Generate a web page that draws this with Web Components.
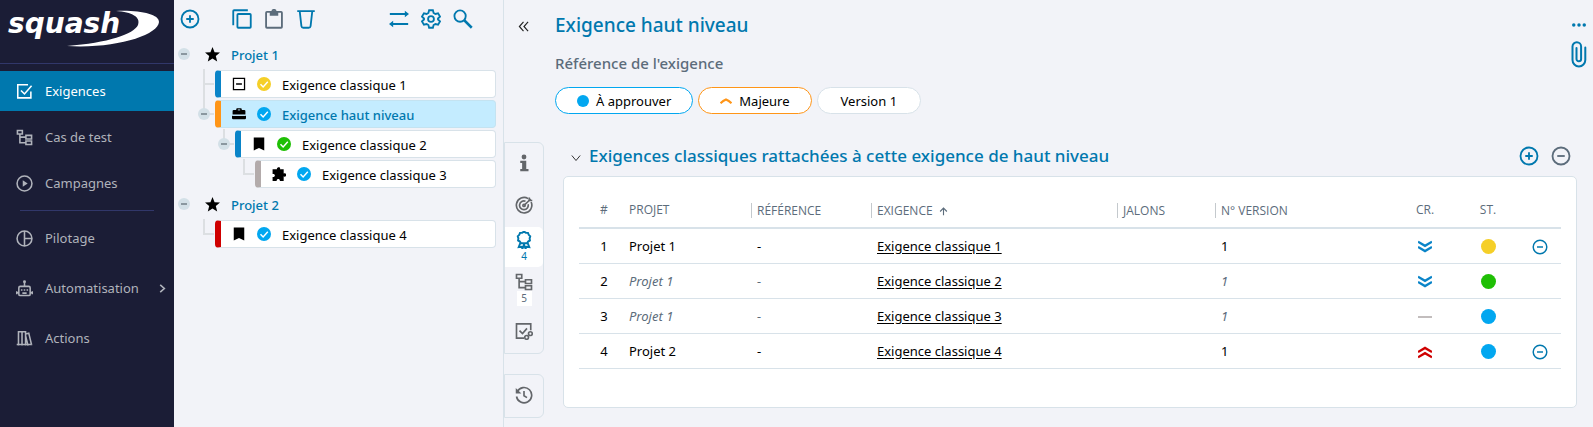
<!DOCTYPE html>
<html lang="fr">
<head>
<meta charset="utf-8">
<title>Squash - Exigences</title>
<style>
body {
  margin: 0;
  background: #f2f3f8;
  color: #000;
  font: 13px/20px "Noto Sans", "Open Sans", sans-serif;
  --blue: #0078ae;
  --line: #d8e2e9;
  --grey: #5c6c7b;
}
</style>
<script>
const ICONS = {
  check: '<path d="M21 12v9H2.500V2.500H17M7 10.500l5 5L22 4"/>',
  tree: '<path d="M2 2h7v5H2zM14 9h8v5h-8zM14 17h8v5h-8zM5.500 7v12.500H14M5.500 11.500H14"/>',
  play: '<circle cx="12" cy="12" r="10.500"/><path fill="currentColor" stroke="none" d="M9.500 7.500l7 4.500-7 4.500z"/>',
  pie: '<circle cx="12" cy="12" r="10.500"/><path d="M12 1.500v21M12 12h10.500"/>',
  robot: '<rect x="4" y="9" width="16" height="13" rx="2"/><path d="M12 9V3M1 16v4M23 16v4M1 18h3M20 18h3M9 18.500h6"/><circle cx="12" cy="2.500" r="1"/><path d="M8 13v2M16 13v2M12 13v2"/>',
  books: '<path d="M3.500 22V2.500h10V22M8.500 2.500V22M13.500 5.500l4.500-1L22 21M13.500 8l3.500 14M1 20.500h22"/>',
  right: '<path stroke-width="3.500" d="M7 4l9 8-9 8"/>',
  plus: '<circle cx="12" cy="12" r="10.200"/><path d="M12 7.500v9M7.500 12h9"/>',
  minus: '<circle cx="12" cy="12" r="10.200"/><path d="M7.500 12h9"/>',
  copy: '<rect x="6.500" y="6" width="16" height="16.500" rx="1"/><path d="M1.500 19.500V2.500q0-1 1-1H19"/>',
  paste: '<rect x="2.500" y="3.500" width="19" height="19" rx="1"/><path fill="currentColor" d="M8 4h8v3H8z"/><circle cx="12" cy="3" r="2"/>',
  trash: '<path d="M1.500 2.500h21M4.500 3l2 17.500q.3 2 2.200 2h6.600q1.900 0 2.200-2L19.500 3"/>',
  swap: '<path d="M1 6h20M3 18h20"/><path fill="currentColor" stroke="none" d="M19 2l5 4-5 4zM5 14l-5 4 5 4z"/>',
  gear: '<path d="M9.700 1.500h4.600l.8 3.200 2.200 1.300 3.200-.9 2.300 4-2.400 2.300v1.200l2.400 2.300-2.300 4-3.200-.9-2.200 1.300-.8 3.200H9.700l-.8-3.200L6.700 18l-3.200.9-2.300-4 2.400-2.300v-1.200L1.200 9.100l2.300-4 3.200.9 2.200-1.300z"/><circle cx="12" cy="12" r="3.500"/>',
  search: '<circle cx="8.500" cy="8.500" r="6.800"/><path d="M13.500 13.500l9 9" stroke-width="3"/>',
  star: '<path fill="currentColor" stroke="none" d="M12 0l3.300 8.300 8.700.6-6.700 5.600 2.200 8.700L12 18.400l-7.500 4.800 2.200-8.700L0 8.900l8.700-.6z"/>',
  box: '<path d="M2.500 2.500h19v19h-19zM7 12h10"/>',
  case: '<path fill="currentColor" stroke="none" d="M8 2h8l1 3h4q2 0 2 2v6H1V7q0-2 2-2h4zM0 15h24v4q0 2-2 2H2q-2 0-2-2z"/><path stroke="#c6ecff" stroke-width="1.500" d="M10 5h4M1 14.500h22"/>',
  bookmark: '<path fill="currentColor" stroke="none" d="M3 1h18v22l-9-4-9 4z"/>',
  puzzle: '<path fill="currentColor" stroke="none" d="M1 4h7.500C7.500 0 14 -1 14 2.500q0 1-.5 1.500H20v7c6-1.500 6 5.500 1.500 5.500-1 0-1.500-.5-1.500-.5V24h-6.500c.5-4.500-6-4.500-5.500 0H1v-7c5 1 5.500-6 0-5z"/>',
  ok: '<circle cx="12" cy="12" r="12" fill="currentColor" stroke="none"/><path stroke="#fff" stroke-width="2.500" d="M6 12.500l4.500 4.500L18.500 8"/>',
  dot: '<circle cx="12" cy="12" r="12" fill="currentColor" stroke="none"/>',
  collapse: '<path stroke-width="2.500" d="M12 2l-9 10 9 10M22 2l-9 10 9 10"/>',
  info: '<circle cx="12" cy="4" r="3.200" fill="currentColor" stroke="none"/><path fill="currentColor" stroke="none" d="M7 9h8v11h3v3H7v-3h2.500v-8H7z"/>',
  target: '<path d="M21.500 8a10.300 10.300 0 1 1-4-4.500M17.500 11a5.800 5.800 0 1 1-3.500-4M12 12.500L21 4"/><circle cx="12" cy="12.500" r="1.500"/><path d="M19 2v4h4"/>',
  rosette: '<path stroke-width="2.600" d="M12 1l2.500 1.300 2.800.2 1 2.600 2 2-.8 2.700.4 2.800-2.400 1.500-1.500 2.300-2.800-.2-1.200.6-1.200-.6-2.800.2-1.500-2.300-2.400-1.500.4-2.800L3.700 7.100l2-2 1-2.600 2.800-.2zM7.500 15L5 21.500l3.500-.5L10 23.500l2-5.500 2 5.500 1.500-2.500 3.500.5-2.500-6.500"/>',
  checklink: '<path d="M21 11V2.500H2v19h10M6 11.500l4 4 6-7"/><circle cx="15.500" cy="20.500" r="2.500"/><circle cx="20.500" cy="15.500" r="2.500"/>',
  history: '<path d="M3 7.500A10.200 10.200 0 1 1 2 14M12 6.500V13l4 2.500"/><path fill="currentColor" stroke="none" d="M1 2.500v7.500h7.500z"/>',
  more: '<g fill="currentColor" stroke="none"><circle cx="3" cy="12" r="3"/><circle cx="12" cy="12" r="3"/><circle cx="21" cy="12" r="3"/></g>',
  down: '<path d="M2 6l10 12L22 6"/>',
  up: '<path stroke-width="3" d="M12 22V3M3 12l9-9 9 9"/>',
  major: '<path stroke-width="4.500" d="M1 16.500q5-5 11-7.500 6 2.500 11 7.500"/>',
  minor2: '<path stroke-width="4" d="M0 3l12 7 12-7M0 12l12 7 12-7"/>',
  crit2: '<path stroke-width="4" d="M0 12l12-7 12 7M0 21l12-7 12 7"/>',
  dash: '<path stroke-width="3" d="M0 12h24"/>',
};

class SquashIcon extends HTMLElement {
  constructor() {
    super();
    this.attachShadow({mode: 'open'});
  }

  connectedCallback() {
    const size = this.getAttribute('size') || 16;
    this.shadowRoot.innerHTML = `
<style>
:host { display: inline-flex; flex: none; vertical-align: middle; }
</style>
<svg width="${size}" height="${size}" viewBox="0 0 24 24" fill="none" stroke="currentColor" stroke-width="2.200" aria-hidden="true">${ICONS[this.getAttribute('name')]}</svg>
`;
  }
}
customElements.define('squash-icon', SquashIcon);

class SquashNavItem extends HTMLElement {
  constructor() {
    super();
    this.attachShadow({mode: 'open'});
  }

  connectedCallback() {
    const more = this.hasAttribute('more') ? '<squash-icon name="right" size="11"></squash-icon>' : '';
    this.shadowRoot.innerHTML = `
<style>
:host { display: block; color: #b0b3bb; }
:host([active]) { background: var(--blue); color: #fff; }
a {
  display: flex;
  align-items: center;
  gap: 12px;
  height: 40px;
  padding: 0 6px 0 16px;
  color: inherit;
  text-decoration: none;
}
span { flex: 1; }
</style>
<a href="#"><squash-icon name="${this.getAttribute('icon')}" size="17"></squash-icon><span><slot></slot></span>${more}</a>
`;
  }
}
customElements.define('squash-nav-item', SquashNavItem);

class SquashNav extends HTMLElement {
  constructor() {
    super();
    this.attachShadow({mode: 'open'}).innerHTML = `
<style>
:host { display: block; flex: none; width: 174px; background: #1b1d36; }
.logo { display: block; height: 63px; border-bottom: 1px solid #31376a; }
nav { display: grid; gap: 6px; padding-top: 7px; }
nav.tools { gap: 10px; }
hr { margin: 7px 20px 0; border: 0; border-top: 1px solid #31376a; }
</style>
<a class="logo" href="#" aria-label="squash">
  <svg width="174" height="63" viewBox="0 0 174 63" fill="#fff">
    <text x="8" y="33" font-family="DejaVu Sans, sans-serif" font-size="28" font-weight="bold" font-style="italic">squash</text>
    <path d="M116 11C140 10 159 14 159 22C158 35 116 49 67 46C108 43 134 34 138 25C141 17 132 12 116 11z"/>
  </svg>
</a>
<nav>
  <squash-nav-item icon="check" active>Exigences</squash-nav-item>
  <squash-nav-item icon="tree">Cas de test</squash-nav-item>
  <squash-nav-item icon="play">Campagnes</squash-nav-item>
</nav>
<hr>
<nav class="tools">
  <squash-nav-item icon="pie">Pilotage</squash-nav-item>
  <squash-nav-item icon="robot" more>Automatisation</squash-nav-item>
  <squash-nav-item icon="books">Actions</squash-nav-item>
</nav>
`;
  }
}
customElements.define('squash-nav', SquashNav);

class SquashTreeNode extends HTMLElement {
  constructor() {
    super();
    this.attachShadow({mode: 'open'});
  }

  connectedCallback() {
    const level = +this.getAttribute('level');
    const color = this.getAttribute('color');
    const toggle = this.hasAttribute('open') ? '<button aria-label="Replier"></button>' : '';
    this.shadowRoot.innerHTML = `
<style>
:host { display: flex; height: 30px; padding-left: ${level * 20}px; }
.guide {
  flex: none;
  display: grid;
  place-items: center;
  width: 20px;
}
:host([line]) .guide {
  background:
    linear-gradient(#dcdfe2, #dcdfe2) 9px 0 / 2px 16px no-repeat,
    linear-gradient(#dcdfe2, #dcdfe2) 9px 14px / 11px 2px no-repeat;
}
:host([line=through]) .guide {
  background:
    linear-gradient(#dcdfe2, #dcdfe2) 9px 0 / 2px 30px no-repeat,
    linear-gradient(#dcdfe2, #dcdfe2) 9px 14px / 11px 2px no-repeat;
}
button {
  display: grid;
  place-items: center;
  width: 12px;
  height: 12px;
  padding: 0;
  border: 0;
  border-radius: 50%;
  background: #d3e0e7;
}
button::after { content: ""; width: 6px; height: 2px; background: #8a979f; }
a {
  flex: 1;
  display: flex;
  align-items: center;
  gap: 11px;
  color: inherit;
  text-decoration: none;
}
.item {
  box-sizing: border-box;
  margin: 1px;
  padding-left: 11px;
  border: 1px solid var(--line);
  border-left: 6px solid ${color};
  border-radius: 4px;
  background: #fff;
}
:host([selected]) .item {
  border-color: #c4e3f1;
  border-left-color: ${color};
  background: #c4ecff;
  color: var(--blue);
  font-weight: 500;
}
a squash-icon:first-child { color: #000; }
.status { color: ${this.getAttribute('status')}; }
.label { padding-top: 1px; }
.project { padding-left: 11px; color: var(--blue); font-weight: 500; }
</style>
<span class="guide">${toggle}</span>
${level ? `<a class="item" href="#"><squash-icon name="${this.getAttribute('icon')}" size="14"></squash-icon><squash-icon class="status" name="ok" size="14"></squash-icon><span class="label"><slot></slot></span></a>`
        : '<a class="project" href="#"><squash-icon name="star" size="15"></squash-icon><span class="label"><slot></slot></span></a>'}
`;
  }
}
customElements.define('squash-tree-node', SquashTreeNode);

class SquashTree extends HTMLElement {
  constructor() {
    super();
    this.attachShadow({mode: 'open'}).innerHTML = `
<style>
:host {
  display: block;
  box-sizing: border-box;
  flex: none;
  width: 330px;
  padding-right: 6px;
  border-right: 1px solid var(--line);
}
header { display: flex; justify-content: space-between; height: 38px; margin-bottom: 1px; padding: 0 24px 0 6px; color: var(--blue); }
.group { display: flex; align-items: center; gap: 12px; }
.add { margin-right: 20px; }
.paste { color: var(--grey); }
button { display: flex; padding: 0; border: 0; background: none; color: inherit; }
</style>
<header>
  <div class="group">
    <button class="add" aria-label="Ajouter"><squash-icon name="plus" size="20"></squash-icon></button>
    <button aria-label="Copier"><squash-icon name="copy" size="20"></squash-icon></button>
    <button class="paste" aria-label="Coller"><squash-icon name="paste" size="20"></squash-icon></button>
    <button aria-label="Supprimer"><squash-icon name="trash" size="20"></squash-icon></button>
  </div>
  <div class="group">
    <button aria-label="Importer ou exporter"><squash-icon name="swap" size="20"></squash-icon></button>
    <button aria-label="Options"><squash-icon name="gear" size="20"></squash-icon></button>
    <button aria-label="Rechercher"><squash-icon name="search" size="20"></squash-icon></button>
  </div>
</header>
<slot></slot>
`;
  }
}
customElements.define('squash-tree', SquashTree);

class SquashPill extends HTMLElement {
  constructor() {
    super();
    this.attachShadow({mode: 'open'});
  }

  connectedCallback() {
    const icon = this.getAttribute('icon');
    this.shadowRoot.innerHTML = `
<style>
:host { display: block; }
button {
  display: flex;
  align-items: center;
  gap: 7px;
  height: 27px;
  padding: 0 ${icon ? 21 : 23}px;
  border: 1px solid ${this.getAttribute('color')};
  border-radius: 14px;
  background: #fff;
  color: #000;
  font: inherit;
}
squash-icon { color: ${this.getAttribute('color')}; }
</style>
<button>${icon ? `<squash-icon name="${icon}" size="12"></squash-icon>` : ''}<slot></slot></button>
`;
  }
}
customElements.define('squash-pill', SquashPill);

class SquashAnchors extends HTMLElement {
  constructor() {
    super();
    this.attachShadow({mode: 'open'}).innerHTML = `
<style>
:host { display: flex; flex-direction: column; gap: 20px; flex: none; width: 40px; color: #63666a; }
nav {
  display: grid;
  gap: 2px;
  padding-bottom: 2px;
  border: 1px solid var(--line);
  border-radius: 0 6px 6px 0;
}
a {
  display: flex;
  flex-direction: column;
  align-items: center;
  justify-content: center;
  height: 40px;
  border-radius: 0 5px 5px 0;
  color: inherit;
  text-decoration: none;
  font-size: 10px;
  line-height: 15px;
}
a[aria-current] { background: #fff; color: var(--blue); }
span { width: 15px; text-align: center; background: #fff; color: var(--grey); }
a[aria-current] span { color: var(--blue); }
</style>
<nav>
  <a href="#" aria-label="Informations"><squash-icon name="info" size="18"></squash-icon></a>
  <a href="#" aria-label="Couverture"><squash-icon name="target" size="18"></squash-icon></a>
  <a href="#" aria-current="true"><squash-icon name="rosette" size="18"></squash-icon><span>4</span></a>
  <a href="#"><squash-icon name="tree" size="18"></squash-icon><span>5</span></a>
  <a href="#" aria-label="Liens"><squash-icon name="checklink" size="18"></squash-icon></a>
</nav>
<nav><a href="#" aria-label="Historique"><squash-icon name="history" size="18"></squash-icon></a></nav>
`;
  }
}
customElements.define('squash-anchors', SquashAnchors);

const YELLOW = '#f5cf28', GREEN = '#1fbf05', BLUE = '#02a7f0';
const ROWS = [
  {project: 'Projet 1', name: 'Exigence classique 1', crit: 'minor2', critColor: '#0a84c8', status: YELLOW, direct: true},
  {project: 'Projet 1', name: 'Exigence classique 2', crit: 'minor2', critColor: '#0a84c8', status: GREEN},
  {project: 'Projet 1', name: 'Exigence classique 3', crit: 'dash', critColor: '#bab4b4', status: BLUE},
  {project: 'Projet 2', name: 'Exigence classique 4', crit: 'crit2', critColor: '#cf0000', status: BLUE, direct: true},
];

class SquashTable extends HTMLElement {
  constructor() {
    super();
    const rows = ROWS.map((row, i) => `
<tr class="${row.direct ? '' : 'indirect'}">
  <td class="center">${i + 1}</td>
  <td class="soft">${row.project}</td>
  <td class="soft">-</td>
  <td><a href="#">${row.name}</a></td>
  <td></td>
  <td class="soft">1</td>
  <td class="mid"><squash-icon name="${row.crit}" size="14" style="color: ${row.critColor}"></squash-icon></td>
  <td class="mid"><squash-icon name="dot" size="15" style="color: ${row.status}"></squash-icon></td>
  <td class="act">${row.direct ? '<button aria-label="Retirer"><squash-icon name="minus" size="16"></squash-icon></button>' : ''}</td>
</tr>`).join('');
    this.attachShadow({mode: 'open'}).innerHTML = `
<style>
:host {
  display: block;
  padding: 16px 15px 38px;
  border: 1px solid var(--line);
  border-radius: 5px;
  background: #fff;
}
table { width: 100%; table-layout: fixed; border-collapse: separate; border-spacing: 0; }
th, td { box-sizing: border-box; padding: 0 0 0 6px; text-align: left; }
th {
  height: 36px;
  border-bottom: 2px solid var(--line);
  color: var(--grey);
  font-family: "Open Sans", sans-serif;
  font-size: 12px;
  font-weight: 400;
}
th span { display: block; margin-left: -6px; padding-left: 5px; border-left: 1px solid #c4c9cd; line-height: 15px; }
td { height: 35px; border-bottom: 1px solid var(--line); }
.center { padding-left: 6px; text-align: center; }
.act { padding: 0; text-align: center; }
.mid { padding: 0; text-align: center; }
td.mid { padding-bottom: 2px; }
.indirect .soft { color: var(--grey); font-style: italic; }
a { color: inherit; text-underline-offset: 2px; }
button { padding: 0; border: 0; background: none; color: var(--blue); }
</style>
<table>
  <colgroup>
    <col width="44"><col width="128"><col width="120"><col width="246"><col width="98"><col><col width="64"><col width="62"><col width="42">
  </colgroup>
  <thead>
    <tr>
      <th class="center">#</th>
      <th>PROJET</th>
      <th><span>RÉFÉRENCE</span></th>
      <th><span>EXIGENCE&nbsp; <squash-icon name="up" size="9"></squash-icon></span></th>
      <th><span>JALONS</span></th>
      <th><span>N° VERSION</span></th>
      <th class="mid">CR.</th>
      <th class="mid">ST.</th>
      <th></th>
    </tr>
  </thead>
  <tbody>${rows}</tbody>
</table>
`;
  }
}
customElements.define('squash-table', SquashTable);

class SquashDetail extends HTMLElement {
  constructor() {
    super();
    this.attachShadow({mode: 'open'}).innerHTML = `
<style>
:host { display: block; flex: 1; min-width: 0; }
button { display: flex; padding: 0; border: 0; background: none; color: inherit; }
header { display: flex; align-items: flex-start; height: 142px; padding: 0 6px 0 14px; box-sizing: border-box; color: var(--blue); }
.fold { margin-top: 21px; color: #222; }
.titles { flex: 1; margin-left: 26px; }
h1, h2, p { margin: 0; font-weight: 500; }
h1 { padding-top: 13px; font-size: 19px; line-height: 24px; }
p { padding: 14px 0 12px; color: var(--grey); font-size: 15px; line-height: 24px; }
.pills { display: flex; gap: 5px; }
.actions { display: grid; justify-items: center; gap: 8px; padding-top: 18px; }
.body { display: flex; }
section { flex: 1; min-width: 0; margin: 0 16px 18px 19px; }
.bar { display: flex; align-items: center; gap: 12px; height: 28px; padding: 0 6px 6px 8px; }
.bar > div { flex: 1; display: flex; align-items: center; gap: 8px; }
.bar > div button { padding-top: 4px; color: #222; }
.bar > button { color: var(--blue); }
.bar > .remove { color: var(--grey); }
h2 { color: var(--blue); font-size: 17px; line-height: 24px; }
</style>
<header>
  <button class="fold" aria-label="Replier"><squash-icon name="collapse" size="11"></squash-icon></button>
  <div class="titles">
    <h1>Exigence haut niveau</h1>
    <p>Référence de l'exigence</p>
    <div class="pills">
      <squash-pill icon="dot" color="#02a7f0">À approuver</squash-pill>
      <squash-pill icon="major" color="#ff9517">Majeure</squash-pill>
      <squash-pill color="#d8e2e9">Version 1</squash-pill>
    </div>
  </div>
  <div class="actions">
    <button aria-label="Plus d'actions"><squash-icon name="more" size="14"></squash-icon></button>
    <button aria-label="Pièces jointes">
      <svg width="16" height="28" viewBox="0 0 16 28" fill="none" stroke="currentColor" stroke-width="2" stroke-linecap="round"><path d="M5.500 8v11a2.300 2.300 0 0 0 4.600 0V6.500a4.300 4.300 0 0 0-8.600 0V20a6.400 6.400 0 0 0 12.800 0V7.500"/></svg>
    </button>
  </div>
</header>
<div class="body">
  <squash-anchors></squash-anchors>
  <section>
    <div class="bar">
      <div>
        <button aria-label="Replier le bloc"><squash-icon name="down" size="10"></squash-icon></button>
        <h2>Exigences classiques rattachées à cette exigence de haut niveau</h2>
      </div>
      <button aria-label="Ajouter"><squash-icon name="plus" size="20"></squash-icon></button>
      <button class="remove" aria-label="Retirer"><squash-icon name="minus" size="20"></squash-icon></button>
    </div>
    <squash-table></squash-table>
  </section>
</div>
`;
  }
}
customElements.define('squash-detail', SquashDetail);

class SquashApp extends HTMLElement {
  constructor() {
    super();
    this.attachShadow({mode: 'open'}).innerHTML = `
<style>
:host { display: flex; min-height: 100vh; }
</style>
<squash-nav></squash-nav>
<squash-tree>
  <squash-tree-node level="0" open>Projet 1</squash-tree-node>
  <squash-tree-node level="1" line="through" icon="box" color="#0a84c8" status="#f5cf28">Exigence classique 1</squash-tree-node>
  <squash-tree-node level="1" line="end" open selected icon="case" color="#ff9517" status="#02a7f0">Exigence haut niveau</squash-tree-node>
  <squash-tree-node level="2" line="end" open icon="bookmark" color="#0a84c8" status="#1fbf05">Exigence classique 2</squash-tree-node>
  <squash-tree-node level="3" line="end" icon="puzzle" color="#b3abab" status="#02a7f0">Exigence classique 3</squash-tree-node>
  <squash-tree-node level="0" open>Projet 2</squash-tree-node>
  <squash-tree-node level="1" line="end" icon="bookmark" color="#cf0000" status="#02a7f0">Exigence classique 4</squash-tree-node>
</squash-tree>
<squash-detail></squash-detail>
`;
  }
}
customElements.define('squash-app', SquashApp);
</script>
</head>
<body>
<squash-app></squash-app>
</body>
</html>
